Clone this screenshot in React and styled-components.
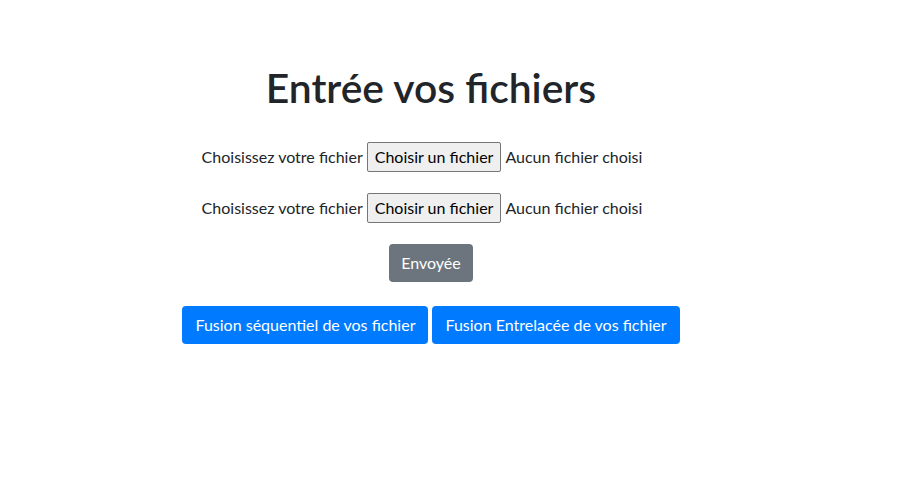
import React from "react";
import styled, { createGlobalStyle } from "styled-components";

const GlobalStyle = createGlobalStyle`
  body {
    margin: 0;
    background: #fff;
    color: #212529;
    font-family: "Segoe UI", Lato, "Liberation Sans", sans-serif;
    font-size: 16px;
  }
`;

const Page = styled.div`
  display: flex;
  flex-direction: column;
  align-items: center;
  width: 862px;
  padding-top: 64px;
`;

const Title = styled.h1`
  margin: 0 0 30px;
  font-size: 40.8px;
  font-weight: 600;
  line-height: 48px;
`;

const FileRow = styled.label`
  display: flex;
  align-items: center;
  gap: 4px;
  height: 30px;
  margin-bottom: 21px;
  padding-right: 18px;
  line-height: 24px;
`;

const PickButton = styled.span`
  display: inline-flex;
  align-items: center;
  height: 30px;
  box-sizing: border-box;
  padding: 0 7px;
  background: #efefef;
  border: 1px solid #767676;
  border-radius: 2px;
  color: #000;
`;

const Button = styled.button`
  font-family: inherit;
  font-size: 16px;
  line-height: 24px;
  padding: ${(p) => (p.$variant === "primary" ? "6px 12px" : "6px 11px")};
  border: 1px solid transparent;
  border-radius: 4px;
  color: #fff;
  background: ${(p) => (p.$variant === "primary" ? "#007bff" : "#6c757d")};
  cursor: pointer;
`;

const ButtonGroup = styled.div`
  display: flex;
  gap: 4px;
  margin-top: 24px;
`;

const FileInput = () => (
  <FileRow>
    Choisissez votre fichier
    <PickButton>Choisir un fichier</PickButton>
    Aucun fichier choisi
  </FileRow>
);

export default function App() {
  return (
    <>
      <GlobalStyle />
      <Page>
        <Title>Entrée vos fichiers</Title>
        <FileInput />
        <FileInput />
        <Button>Envoyée</Button>
        <ButtonGroup>
          <Button $variant="primary">Fusion séquentiel de vos fichier</Button>
          <Button $variant="primary">Fusion Entrelacée de vos fichier</Button>
        </ButtonGroup>
      </Page>
    </>
  );
}
